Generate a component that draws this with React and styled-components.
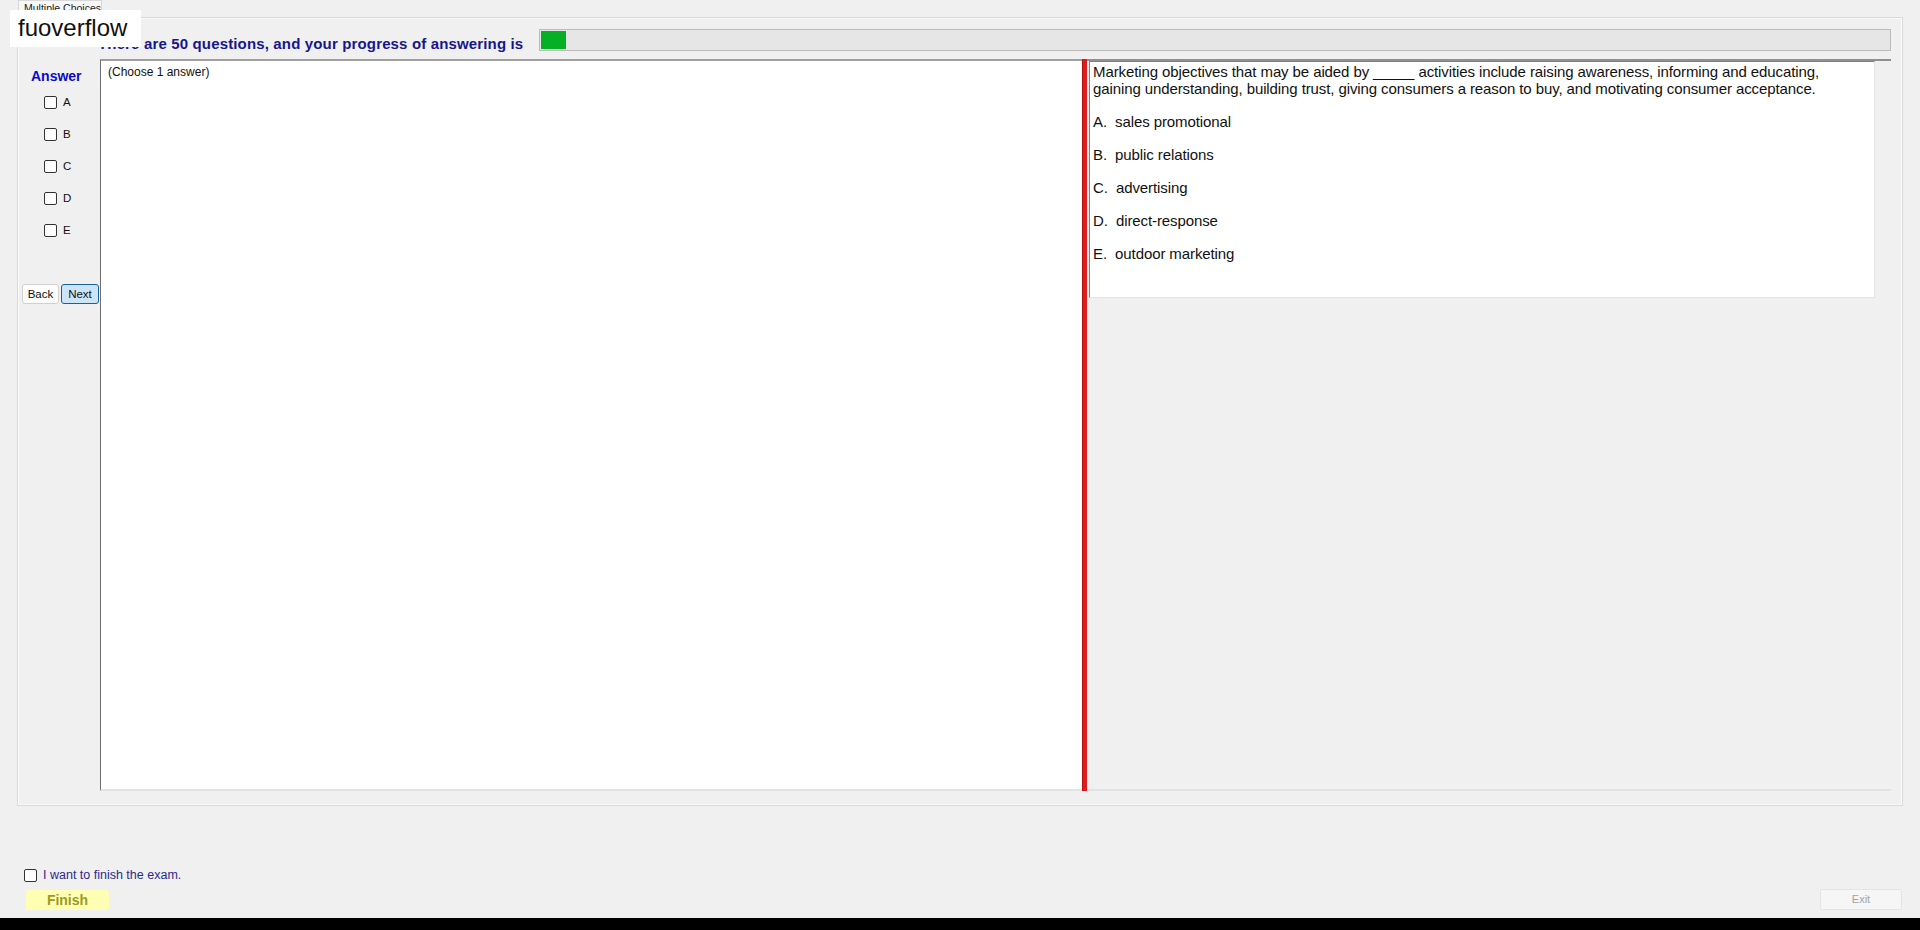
import React from 'react'
import styled, { createGlobalStyle } from 'styled-components'

const GlobalStyle = createGlobalStyle`
    html, body {
        margin: 0;
        padding: 0;
        background: #f0f0f0;
        font-family: "Liberation Sans", Arial, sans-serif;
    }
`

const options = [
    { key: 'A', text: 'sales promotional' },
    { key: 'B', text: 'public relations' },
    { key: 'C', text: 'advertising' },
    { key: 'D', text: 'direct-response' },
    { key: 'E', text: 'outdoor marketing' },
]

function App() {
    const answered = 1
    const total = 50
    return (
        <Page>
            <GlobalStyle />
            <TabStrip>
                <Tab>Multiple Choices</Tab>
            </TabStrip>
            <TabPanel>
                <AnswerColumn>
                    <AnswerTitle>Answer</AnswerTitle>
                    {options.map(o => (
                        <CheckRow key={o.key}>
                            <Check type="checkbox" />
                            <CheckLabel>{o.key}</CheckLabel>
                        </CheckRow>
                    ))}
                    <NavButtons>
                        <NavButton>Back</NavButton>
                        <NavButton primary>Next</NavButton>
                    </NavButtons>
                </AnswerColumn>
                <MainColumn>
                    <HeadRow>
                        <Heading>There are {total} questions, and your progress of answering is</Heading>
                        <Progress>
                            <ProgressFill style={{ width: `${(answered / total) * 90}%` }} />
                        </Progress>
                    </HeadRow>
                    <Workspace>
                        <AnswerBox>(Choose 1 answer)</AnswerBox>
                        <Splitter />
                        <QuestionPane>
                            <QuestionBox>
                                <QuestionText>
                                    Marketing objectives that may be aided by _____ activities include raising awareness, informing and educating,
                                    <br />
                                    gaining understanding, building trust, giving consumers a reason to buy, and motivating consumer acceptance.
                                </QuestionText>
                                {options.map(o => (
                                    <Option key={o.key}>{o.key}.&nbsp; {o.text}</Option>
                                ))}
                            </QuestionBox>
                        </QuestionPane>
                    </Workspace>
                </MainColumn>
            </TabPanel>
            <BottomBar>
                <FinishGroup>
                    <CheckRow small>
                        <Check type="checkbox" />
                        <FinishLabel>I want to finish the exam.</FinishLabel>
                    </CheckRow>
                    <FinishButton>Finish</FinishButton>
                </FinishGroup>
                <ExitButton>Exit</ExitButton>
            </BottomBar>
            <BlackStrip />
            <Watermark>fuoverflow</Watermark>
        </Page>
    )
}

export default App

const Page = styled.div`
    position: relative;
    height: 930px;
    display: flex;
    flex-direction: column;
    background: #f0f0f0;
    overflow: hidden;
`

const TabStrip = styled.div`
    height: 17px;
    display: flex;
    padding-left: 18px;
`

const Tab = styled.div`
    width: 84px;
    height: 17px;
    box-sizing: border-box;
    border: 1px solid #d9d9d9;
    border-bottom: none;
    background: #f7f7f7;
    font-size: 10.5px;
    line-height: 14px;
    padding-left: 5px;
    color: #222;
    white-space: nowrap;
`

const TabPanel = styled.div`
    height: 789px;
    box-sizing: border-box;
    margin: 0 17px 0 17px;
    border: 1px solid #d9d9d9;
    box-shadow: inset 0 0 0 1px #fbfbfb;
    display: flex;
    padding: 0 11px 14px 0;
`

const AnswerColumn = styled.div`
    width: 82px;
    flex-shrink: 0;
    display: flex;
    flex-direction: column;
    padding-top: 50px;
`

const AnswerTitle = styled.div`
    font-weight: bold;
    font-size: 14px;
    line-height: 16px;
    color: #0a0ac8;
    padding-left: 13px;
    margin-bottom: 2px;
`

const CheckRow = styled.label`
    display: flex;
    align-items: center;
    height: ${p => (p.small ? '14px' : '32px')};
    padding-left: ${p => (p.small ? '0' : '26px')};
`

const Check = styled.input`
    appearance: none;
    margin: 0;
    width: 13px;
    height: 13px;
    box-sizing: border-box;
    border: 1px solid #333;
    border-radius: 2px;
    background: #fff;
`

const CheckLabel = styled.span`
    font-size: 11.5px;
    color: #111;
    margin-left: 6px;
`

const NavButtons = styled.div`
    display: flex;
    gap: 2px;
    margin-top: 38px;
    padding-left: 4px;
`

const NavButton = styled.button`
    height: 20px;
    width: ${p => (p.primary ? '38px' : '37px')};
    padding: 0;
    box-sizing: border-box;
    font-family: "Liberation Sans", Arial, sans-serif;
    font-size: 11.5px;
    color: #111;
    background: ${p => (p.primary ? '#cce4f7' : '#fdfdfd')};
    border: 1px solid ${p => (p.primary ? '#1f5f99' : '#d0d0d0')};
    border-radius: 3px;
`

const MainColumn = styled.div`
    flex: 1;
    display: flex;
    flex-direction: column;
`

const HeadRow = styled.div`
    height: 41px;
    box-sizing: border-box;
    display: flex;
    align-items: flex-start;
    padding-top: 11px;
`

const Heading = styled.div`
    margin: 6px 16px 0 -2px;
    font-weight: bold;
    font-size: 15px;
    line-height: 18px;
    letter-spacing: 0.15px;
    color: #16168e;
    white-space: nowrap;
`

const Progress = styled.div`
    flex: 1;
    height: 22px;
    box-sizing: border-box;
    border: 1px solid #bcbcbc;
    background: #e6e6e6;
    padding: 1px;
`

const ProgressFill = styled.div`
    height: 100%;
    background: #06b025;
`

const Workspace = styled.div`
    flex: 1;
    display: flex;
`

const AnswerBox = styled.div`
    width: 982px;
    box-sizing: border-box;
    background: #fff;
    border-left: 1px solid #6d6d6d;
    border-top: 2px solid #a0a0a0;
    border-bottom: 2px solid #e2e2e2;
    padding: 4px 0 0 7px;
    font-size: 12px;
    color: #111;
`

const Splitter = styled.div`
    width: 5px;
    background: #e01c1c;
    border-left: 1px solid #b51010;
    box-sizing: border-box;
`

const QuestionPane = styled.div`
    flex: 1;
    box-sizing: border-box;
    border-top: 2px solid #8f8f8f;
    border-bottom: 2px solid #e2e2e2;
    padding: 0 16px 0 2px;
`

const QuestionBox = styled.div`
    height: 237px;
    box-sizing: border-box;
    background: #fff;
    border: 1px solid;
    border-color: #828282 #e3e3e3 #e3e3e3 #828282;
    padding: 1px 0 0 3px;
    font-size: 15px;
    letter-spacing: -0.1px;
    color: #111;
`

const QuestionText = styled.p`
    margin: 0;
    line-height: 17px;
`

const Option = styled.p`
    margin: 16px 0 0;
    line-height: 17px;
`

const BottomBar = styled.div`
    flex: 1;
    display: flex;
    align-items: flex-end;
    justify-content: space-between;
    padding: 0 18px 8px 24px;
`

const FinishGroup = styled.div`
    display: flex;
    flex-direction: column;
    gap: 8px;
`

const FinishLabel = styled.span`
    font-size: 12.5px;
    color: #2b2b8c;
    margin-left: 6px;
`

const FinishButton = styled.div`
    width: 83px;
    height: 20px;
    margin-left: 2px;
    background: #ffffb4;
    border-radius: 3px;
    color: #9a9a24;
    font-weight: bold;
    font-size: 14px;
    line-height: 20px;
    text-align: center;
`

const ExitButton = styled.div`
    width: 82px;
    height: 21px;
    box-sizing: border-box;
    background: #f6f6f6;
    border: 1px solid #e4e4e4;
    border-radius: 2px;
    color: #a3a3a3;
    font-size: 11px;
    line-height: 19px;
    text-align: center;
`

const BlackStrip = styled.div`
    height: 12px;
    background: #000;
`

const Watermark = styled.div`
    position: absolute;
    left: 10px;
    top: 10px;
    width: 131px;
    height: 37px;
    box-sizing: border-box;
    background: #fff;
    padding-left: 8px;
    font-size: 24px;
    line-height: 35px;
    color: #111;
`
